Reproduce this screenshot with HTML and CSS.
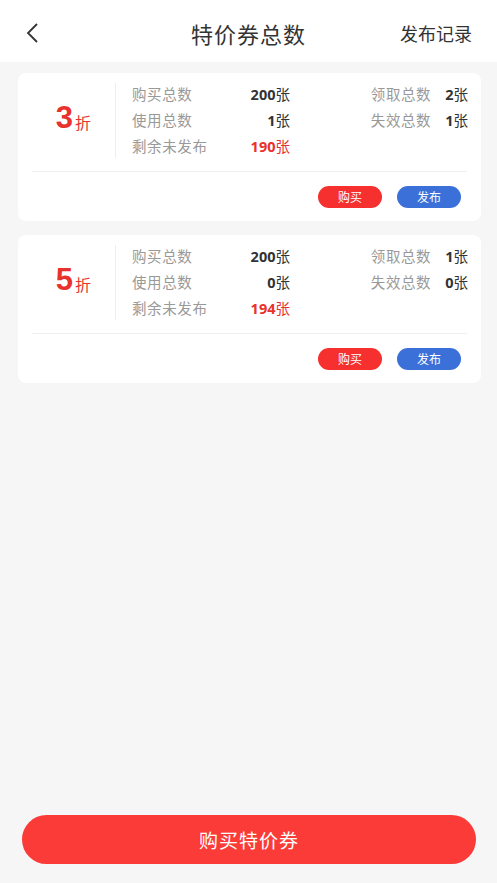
FILE: index.html
```html
<html lang="zh-CN">
<head>
    <meta charset="UTF-8">
    <meta name="viewport" content="width=device-width, initial-scale=1.0">
    <title>特价券总数</title>
    <link rel="stylesheet" href="styles.css">
</head>
<body>
    <div id="page">
        <div class="header">
            <div class="back">
                <svg width="14" height="22" viewBox="0 0 14 22"><path d="M12 2 L3 11 L12 20" fill="none" stroke="#333" stroke-width="1.8"/></svg>
            </div>
            <div class="title">特价券总数</div>
            <div class="record">发布记录</div>
        </div>

        <div class="list">
            <div class="card">
                <div class="card-top">
                    <div class="discount"><span class="num">3</span><span class="unit">折</span></div>
                    <div class="stats">
                        <div class="row">
                            <div class="group left"><span class="label">购买总数</span><span class="val">200<i>张</i></span></div>
                            <div class="group right"><span class="label">领取总数</span><span class="val">2<i>张</i></span></div>
                        </div>
                        <div class="row">
                            <div class="group left"><span class="label">使用总数</span><span class="val">1<i>张</i></span></div>
                            <div class="group right"><span class="label">失效总数</span><span class="val">1<i>张</i></span></div>
                        </div>
                        <div class="row">
                            <div class="group left"><span class="label">剩余未发布</span><span class="val red">190<i>张</i></span></div>
                        </div>
                    </div>
                </div>
                <div class="card-bottom">
                    <div class="btn buy">购买</div>
                    <div class="btn publish">发布</div>
                </div>
            </div>

            <div class="card">
                <div class="card-top">
                    <div class="discount"><span class="num">5</span><span class="unit">折</span></div>
                    <div class="stats">
                        <div class="row">
                            <div class="group left"><span class="label">购买总数</span><span class="val">200<i>张</i></span></div>
                            <div class="group right"><span class="label">领取总数</span><span class="val">1<i>张</i></span></div>
                        </div>
                        <div class="row">
                            <div class="group left"><span class="label">使用总数</span><span class="val">0<i>张</i></span></div>
                            <div class="group right"><span class="label">失效总数</span><span class="val">0<i>张</i></span></div>
                        </div>
                        <div class="row">
                            <div class="group left"><span class="label">剩余未发布</span><span class="val red">194<i>张</i></span></div>
                        </div>
                    </div>
                </div>
                <div class="card-bottom">
                    <div class="btn buy">购买</div>
                    <div class="btn publish">发布</div>
                </div>
            </div>
        </div>

        <div class="footer">
            <div class="buy-all">购买特价券</div>
        </div>
    </div>
</body>
</html>
```

FILE: styles.css
```css
*{
    margin: 0;
    padding: 0;
    box-sizing: border-box;
}
html, body{
    height: 100%;
}
body{
    background: #f6f6f6;
    font-family: "Noto Sans CJK SC", "Noto Sans", sans-serif;
    color: #333;
}
i{
    font-style: normal;
    font-weight: normal;
}

#page{
    height: 100%;
    display: flex;
    flex-direction: column;
}

/* header */
.header{
    height: 62px;
    background: #fff;
    display: flex;
    align-items: center;
    padding: 4px 25px 0 25px;
}
.back{
    width: 72px;
    display: flex;
    align-items: center;
}
.title{
    flex: 1;
    text-align: center;
    font-size: 22px;
    letter-spacing: 1px;
    color: #333;
}
.record{
    width: 72px;
    white-space: nowrap;
    display: flex;
    justify-content: flex-end;
    font-size: 18px;
    color: #333;
}

/* cards */
.list{
    flex: 1;
    padding: 11px 16px 0 18px;
}
.card{
    background: #fff;
    border-radius: 8px;
    padding: 0 14px;
    margin-bottom: 14px;
}
.card-top{
    display: flex;
    padding: 7px 0 13px;
    border-bottom: 1px solid #f0f0f0;
}
.discount{
    width: 84px;
    margin-top: 3px;
    border-right: 1px solid #eee;
    display: flex;
    align-items: center;
    justify-content: center;
    color: #e8322d;
    padding-bottom: 6px;
}
.discount .num{
    font-family: "Liberation Sans", sans-serif;
    font-weight: bold;
    font-size: 31px;
}
.discount .unit{
    font-size: 16px;
    margin-top: 8px;
    margin-left: 2px;
}
.stats{
    flex: 1;
    padding-left: 16px;
}
.row{
    height: 26px;
    display: flex;
    align-items: center;
    justify-content: space-between;
    font-size: 14.5px;
}
.group{
    display: flex;
    align-items: center;
}
.group.left{
    width: 158px;
    justify-content: space-between;
}
.group.right{
    gap: 14px;
    margin-right: -1px;
}
.label{
    color: #999;
    letter-spacing: 0.6px;
}
.val{
    color: #333;
    font-weight: bold;
    font-family: "Noto Sans", sans-serif;
}
.val i{
    font-family: "Noto Sans CJK SC", sans-serif;
}
.val.red{
    color: #e8322d;
}

.card-bottom{
    display: flex;
    justify-content: flex-end;
    gap: 15px;
    padding: 14px 6px 13px 0;
}
.btn{
    width: 64px;
    height: 22px;
    border-radius: 11px;
    color: #fff;
    font-size: 12px;
    line-height: 22px;
    text-align: center;
}
.buy{
    background: #f5302e;
}
.publish{
    background: #3b70d9;
}

/* footer */
.footer{
    padding: 0 21px 19px 22px;
}
.buy-all{
    height: 49px;
    border-radius: 25px;
    background: #fb3b37;
    color: #fff;
    font-size: 19px;
    line-height: 49px;
    text-align: center;
    letter-spacing: 1px;
}
```
